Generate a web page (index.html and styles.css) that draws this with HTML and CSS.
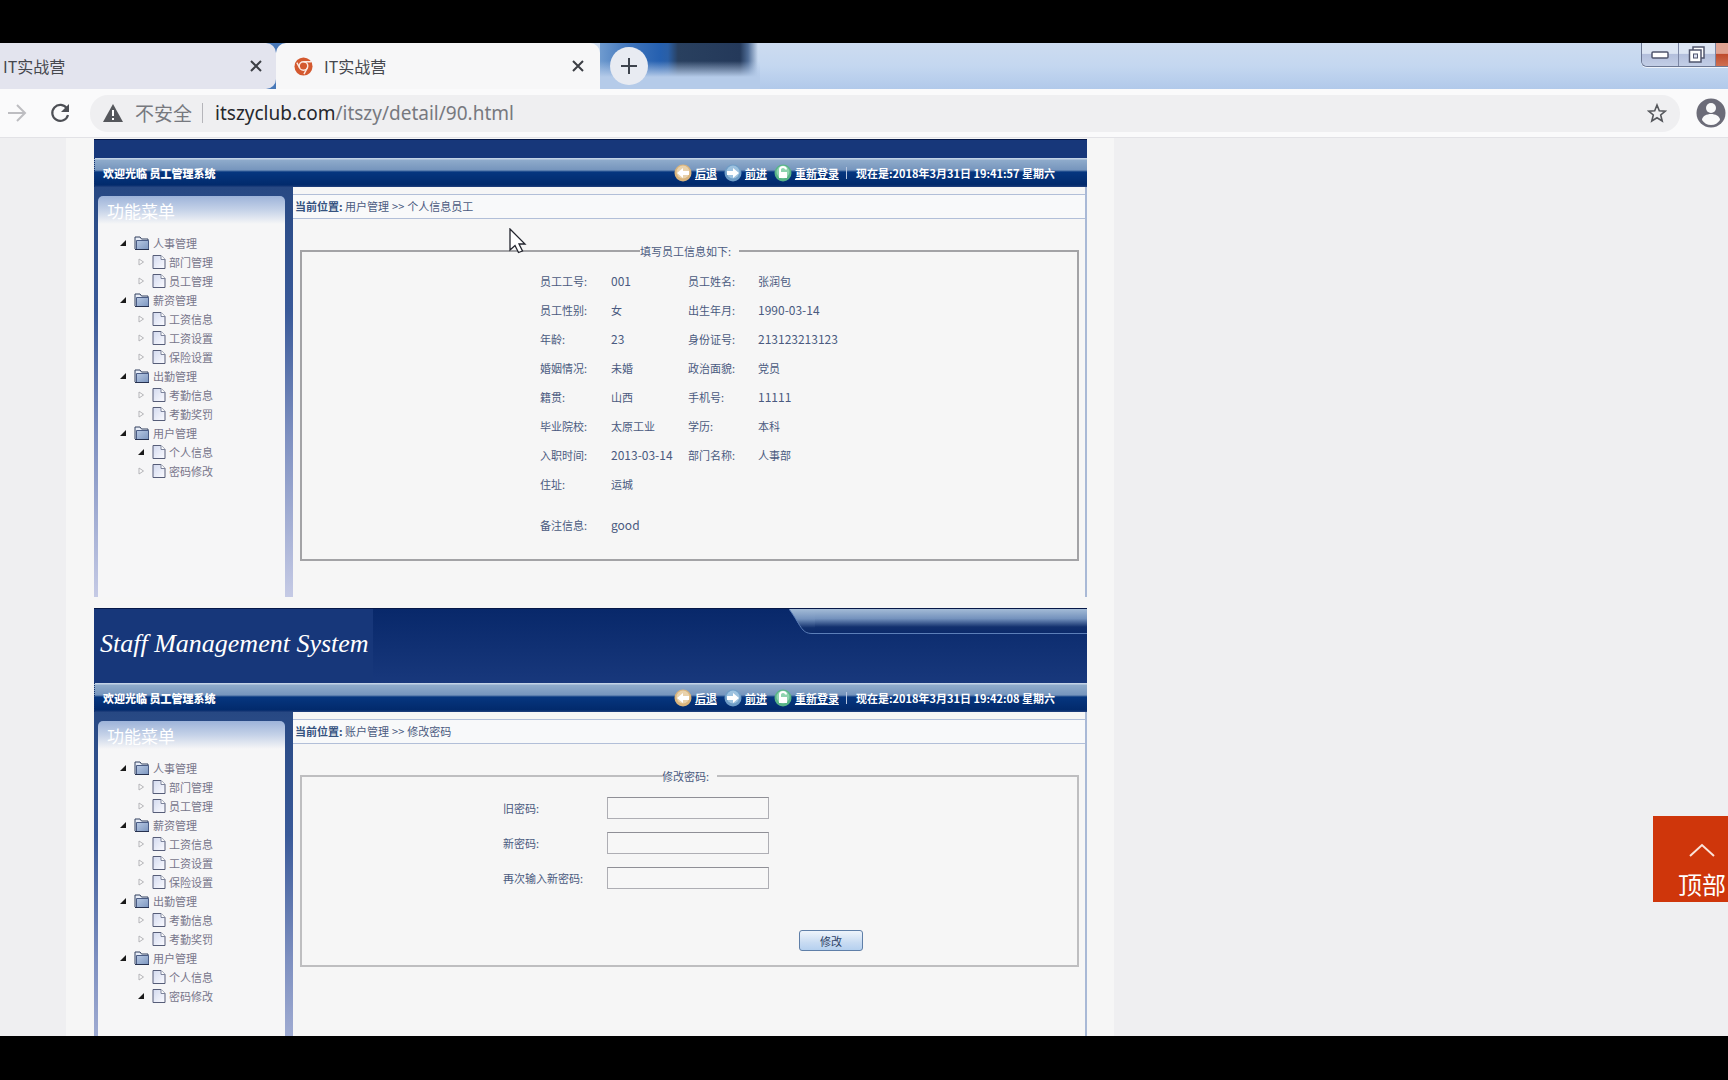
FILE: index.html
```html
<!DOCTYPE html>
<html lang="zh-CN">
<head>
<meta charset="utf-8">
<title>IT实战营</title>
<link rel="stylesheet" href="styles.css">
</head>
<body>
<svg class="defs" aria-hidden="true">
  <defs>
    <linearGradient id="folderFill" x1="0" y1="0" x2="1" y2="1"><stop offset="0" stop-color="#b8c9e4"/><stop offset="1" stop-color="#7c96bf"/></linearGradient>
    <linearGradient id="docFill" x1="0" y1="0" x2="1" y2="1"><stop offset="0" stop-color="#d3daef"/><stop offset="1" stop-color="#fbfbff"/></linearGradient>
    <linearGradient id="tabFill" x1="0" y1="0" x2="0" y2="1"><stop offset="0" stop-color="#a3bbd6"/><stop offset=".4" stop-color="#7492bd"/><stop offset=".75" stop-color="#12306d"/><stop offset="1" stop-color="#0b2a6a"/></linearGradient>
    <symbol id="folder" viewBox="0 0 16 16"><path d="M1 14V2h5l1.500 2H14v2" fill="#e9eef8" stroke="#33405e"/><path d="M2.500 5.500h12v9h-12z" fill="url(#folderFill)" stroke="#4a5c85"/><path d="M1 14.500h14" stroke="#26314f"/></symbol>
    <symbol id="doc" viewBox="0 0 14 16"><path d="M1 1.500h8l4 4v9H1z" fill="url(#docFill)" stroke="#565d78"/><path d="M9 1.500v4h4" fill="#fff" stroke="#7d849c"/></symbol>
    <symbol id="open" viewBox="0 0 8 8"><path d="M7 1v6H1z" fill="#1a1a1a"/></symbol>
    <symbol id="shut" viewBox="0 0 8 8"><path d="M2 1l4.500 3L2 7z" fill="#fafafa" stroke="#b4b4b8"/></symbol>
    <symbol id="back" viewBox="0 0 18 18"><circle cx="9" cy="9" r="8.500" fill="#d9b47c"/><circle cx="9" cy="8" r="6.500" fill="#e9d2ac"/><path d="M3 9l6-5v3h6v4H9v3z" fill="#fff"/></symbol>
    <symbol id="forward" viewBox="0 0 18 18"><circle cx="9" cy="9" r="8.500" fill="#6f9dc6"/><circle cx="9" cy="8" r="6.500" fill="#9dc2df"/><path d="M15 9L9 4v3H3v4h6v3z" fill="#fff"/></symbol>
    <symbol id="relogin" viewBox="0 0 18 18"><circle cx="9" cy="9" r="8.500" fill="#58b487"/><circle cx="9" cy="8" r="6.500" fill="#8ed3ae"/><path d="M5 8h8v6H5z" fill="#fff"/><path d="M6 8V5.500a3 2.500 0 0 1 6 0" fill="none" stroke="#fff" stroke-width="2"/></symbol>
  </defs>
</svg>

<header class="chrome">
  <div class="tabs">
    <div class="tab tab-first"><span>IT实战营</span><button class="icon-btn" aria-label="关闭"><svg width="12" height="12" viewBox="0 0 12 12"><path d="M1 1l10 10M11 1L1 11" stroke="#3c3f45" stroke-width="2"/></svg></button></div>
    <div class="tab tab-active">
      <svg width="19" height="19" viewBox="0 0 20 20"><circle cx="10" cy="10" r="9.500" fill="#d4592f"/><circle cx="10" cy="9.500" r="4.500" fill="none" stroke="#fbe9e2" stroke-width="1.500"/><path d="M10 5h8M6 11.500L3 6M14 11.500L10.500 18" stroke="#fbe9e2" stroke-width="1.500"/></svg>
      <span>IT实战营</span>
      <button class="icon-btn" aria-label="关闭"><svg width="12" height="12" viewBox="0 0 12 12"><path d="M1 1l10 10M11 1L1 11" stroke="#3c3f45" stroke-width="2"/></svg></button>
    </div>
    <div class="glass">
      <button class="new-tab" aria-label="新标签页"><svg width="16" height="16" viewBox="0 0 16 16"><path d="M8 0v16M0 8h16" stroke="#3d434d" stroke-width="2"/></svg></button>
    </div>
    <div class="window-buttons">
      <button aria-label="最小化"><svg width="18" height="8" viewBox="0 0 18 8"><rect x="1" y="1" width="16" height="6" rx="1" fill="#fff" stroke="#50566e" stroke-width="1.500"/></svg></button>
      <button aria-label="还原"><svg width="18" height="18" viewBox="0 0 18 18"><rect x="5" y="1" width="11" height="11" fill="#fff" stroke="#50566e" stroke-width="1.500"/><rect x="1.500" y="4" width="11.500" height="12" fill="#fff" stroke="#50566e" stroke-width="1.500"/><rect x="5.500" y="8" width="4" height="4" fill="#dfe3f2" stroke="#50566e"/></svg></button>
      <button class="close" aria-label="关闭窗口"></button>
    </div>
  </div>
  <div class="toolbar">
    <button class="icon-btn" aria-label="前进"><svg width="20" height="20" viewBox="0 0 20 20"><path d="M0 10h17M9 2l8 8-8 8" fill="none" stroke="#bdbdc1" stroke-width="2"/></svg></button>
    <button class="icon-btn reload" aria-label="重新加载"><svg width="20" height="20" viewBox="0 0 20 20"><path d="M17 5.500A8 8 0 1 0 18 12" fill="none" stroke="#4d4f55" stroke-width="2.200"/><path d="M19 1v8h-8z" fill="#4d4f55"/></svg></button>
    <div class="omnibox">
      <svg width="20" height="18" viewBox="0 0 20 18"><path d="M10 0l10 18H0z" fill="#55575c"/><path d="M10 6v6M10 14v2" stroke="#fff" stroke-width="2"/></svg>
      <span class="insecure">不安全</span>
      <span class="url"><b>itszyclub.com</b>/itszy/detail/90.html</span>
      <button class="icon-btn star" aria-label="收藏"><svg width="20" height="20" viewBox="0 0 20 20"><path d="M10 2l2.300 5.700 6 .4-4.600 3.900 1.500 6L10 14.700 4.800 18l1.500-6L1.700 8.100l6-.4z" fill="none" stroke="#55575c" stroke-width="1.600"/></svg></button>
    </div>
    <button class="icon-btn" aria-label="用户"><svg width="30" height="30" viewBox="0 0 30 30"><circle cx="15" cy="15" r="14.500" fill="#6c6c78"/><circle cx="15" cy="10" r="5" fill="#fafafa"/><path d="M6 22c0-4 5-6 9-6s9 2 9 6c-2 3-5 5-9 5s-7-2-9-5z" fill="#fafafa"/></svg></button>
  </div>
</header>

<main class="viewport">
  <article class="article">

    <section class="shot">
      <div class="banner banner-cut"></div>
      <div class="bar">
        <strong class="welcome">欢迎光临 员工管理系统</strong>
        <nav class="quick">
          <a href="#"><svg width="18" height="18"><use href="#back"/></svg><span>后退</span></a>
          <a href="#"><svg width="18" height="18"><use href="#forward"/></svg><span>前进</span></a>
          <a href="#"><svg width="18" height="18"><use href="#relogin"/></svg><span>重新登录</span></a>
          <i></i>
          <time>现在是:2018年3月31日 19:41:57 星期六</time>
        </nav>
      </div>
      <div class="body">
        <aside class="side">
          <div class="panel">
            <h2>功能菜单</h2>
            <ul class="tree">
              <li><a href="#"><svg width="8" height="8"><use href="#open"/></svg><svg width="16" height="16"><use href="#folder"/></svg>人事管理</a>
                <ul><li><a href="#"><svg width="8" height="8"><use href="#shut"/></svg><svg width="14" height="16"><use href="#doc"/></svg>部门管理</a></li>
                <li><a href="#"><svg width="8" height="8"><use href="#shut"/></svg><svg width="14" height="16"><use href="#doc"/></svg>员工管理</a></li></ul></li>
              <li><a href="#"><svg width="8" height="8"><use href="#open"/></svg><svg width="16" height="16"><use href="#folder"/></svg>薪资管理</a>
                <ul><li><a href="#"><svg width="8" height="8"><use href="#shut"/></svg><svg width="14" height="16"><use href="#doc"/></svg>工资信息</a></li>
                <li><a href="#"><svg width="8" height="8"><use href="#shut"/></svg><svg width="14" height="16"><use href="#doc"/></svg>工资设置</a></li>
                <li><a href="#"><svg width="8" height="8"><use href="#shut"/></svg><svg width="14" height="16"><use href="#doc"/></svg>保险设置</a></li></ul></li>
              <li><a href="#"><svg width="8" height="8"><use href="#open"/></svg><svg width="16" height="16"><use href="#folder"/></svg>出勤管理</a>
                <ul><li><a href="#"><svg width="8" height="8"><use href="#shut"/></svg><svg width="14" height="16"><use href="#doc"/></svg>考勤信息</a></li>
                <li><a href="#"><svg width="8" height="8"><use href="#shut"/></svg><svg width="14" height="16"><use href="#doc"/></svg>考勤奖罚</a></li></ul></li>
              <li><a href="#"><svg width="8" height="8"><use href="#open"/></svg><svg width="16" height="16"><use href="#folder"/></svg>用户管理</a>
                <ul><li><a href="#"><svg width="8" height="8"><use href="#open"/></svg><svg width="14" height="16"><use href="#doc"/></svg>个人信息</a></li>
                <li><a href="#"><svg width="8" height="8"><use href="#shut"/></svg><svg width="14" height="16"><use href="#doc"/></svg>密码修改</a></li></ul></li>
            </ul>
          </div>
        </aside>
        <div class="content">
          <p class="crumb"><strong>当前位置:</strong> 用户管理<span>&gt;&gt;</span>个人信息员工</p>
          <fieldset class="box box-info">
            <legend>填写员工信息如下:</legend>
            <table class="info">
              <tr><th>员工工号:</th><td class="num">001</td><th>员工姓名:</th><td>张润包</td></tr>
              <tr><th>员工性别:</th><td>女</td><th>出生年月:</th><td class="num">1990-03-14</td></tr>
              <tr><th>年龄:</th><td class="num">23</td><th>身份证号:</th><td class="num">213123213123</td></tr>
              <tr><th>婚姻情况:</th><td>未婚</td><th>政治面貌:</th><td>党员</td></tr>
              <tr><th>籍贯:</th><td>山西</td><th>手机号:</th><td class="num">11111</td></tr>
              <tr><th>毕业院校:</th><td>太原工业</td><th>学历:</th><td>本科</td></tr>
              <tr><th>入职时间:</th><td class="num">2013-03-14</td><th>部门名称:</th><td>人事部</td></tr>
              <tr><th>住址:</th><td>运城</td><th></th><td></td></tr>
              <tr class="note"><th>备注信息:</th><td class="num">good</td><th></th><td></td></tr>
            </table>
          </fieldset>
        </div>
      </div>
    </section>

    <section class="shot">
      <div class="banner">
        <div class="logo">Staff Management System</div>
        <svg class="notch" viewBox="0 0 26 26" width="26" height="26"><path d="M0 0h26v25h-3C12 25 12 16 0 0z" fill="url(#tabFill)"/><path d="M0 0c12 16 12 24.500 23 24.500h3" fill="none" stroke="#5c7fb8"/></svg>
        <div class="ribbon"></div>
      </div>
      <div class="bar">
        <strong class="welcome">欢迎光临 员工管理系统</strong>
        <nav class="quick">
          <a href="#"><svg width="18" height="18"><use href="#back"/></svg><span>后退</span></a>
          <a href="#"><svg width="18" height="18"><use href="#forward"/></svg><span>前进</span></a>
          <a href="#"><svg width="18" height="18"><use href="#relogin"/></svg><span>重新登录</span></a>
          <i></i>
          <time>现在是:2018年3月31日 19:42:08 星期六</time>
        </nav>
      </div>
      <div class="body">
        <aside class="side">
          <div class="panel">
            <h2>功能菜单</h2>
            <ul class="tree">
              <li><a href="#"><svg width="8" height="8"><use href="#open"/></svg><svg width="16" height="16"><use href="#folder"/></svg>人事管理</a>
                <ul><li><a href="#"><svg width="8" height="8"><use href="#shut"/></svg><svg width="14" height="16"><use href="#doc"/></svg>部门管理</a></li>
                <li><a href="#"><svg width="8" height="8"><use href="#shut"/></svg><svg width="14" height="16"><use href="#doc"/></svg>员工管理</a></li></ul></li>
              <li><a href="#"><svg width="8" height="8"><use href="#open"/></svg><svg width="16" height="16"><use href="#folder"/></svg>薪资管理</a>
                <ul><li><a href="#"><svg width="8" height="8"><use href="#shut"/></svg><svg width="14" height="16"><use href="#doc"/></svg>工资信息</a></li>
                <li><a href="#"><svg width="8" height="8"><use href="#shut"/></svg><svg width="14" height="16"><use href="#doc"/></svg>工资设置</a></li>
                <li><a href="#"><svg width="8" height="8"><use href="#shut"/></svg><svg width="14" height="16"><use href="#doc"/></svg>保险设置</a></li></ul></li>
              <li><a href="#"><svg width="8" height="8"><use href="#open"/></svg><svg width="16" height="16"><use href="#folder"/></svg>出勤管理</a>
                <ul><li><a href="#"><svg width="8" height="8"><use href="#shut"/></svg><svg width="14" height="16"><use href="#doc"/></svg>考勤信息</a></li>
                <li><a href="#"><svg width="8" height="8"><use href="#shut"/></svg><svg width="14" height="16"><use href="#doc"/></svg>考勤奖罚</a></li></ul></li>
              <li><a href="#"><svg width="8" height="8"><use href="#open"/></svg><svg width="16" height="16"><use href="#folder"/></svg>用户管理</a>
                <ul><li><a href="#"><svg width="8" height="8"><use href="#shut"/></svg><svg width="14" height="16"><use href="#doc"/></svg>个人信息</a></li>
                <li><a href="#"><svg width="8" height="8"><use href="#open"/></svg><svg width="14" height="16"><use href="#doc"/></svg>密码修改</a></li></ul></li>
            </ul>
          </div>
        </aside>
        <div class="content">
          <p class="crumb"><strong>当前位置:</strong> 账户管理<span>&gt;&gt;</span>修改密码</p>
          <fieldset class="box box-password">
            <legend>修改密码:</legend>
            <form class="password">
              <label for="old">旧密码:</label><input id="old" type="password">
              <label for="new">新密码:</label><input id="new" type="password">
              <label for="again">再次输入新密码:</label><input id="again" type="password">
              <button type="button">修改</button>
            </form>
          </fieldset>
        </div>
      </div>
    </section>
  </article>

  <a class="to-top" href="#"><svg width="28" height="16" viewBox="0 0 28 16"><path d="M2 14L14 3l12 11" fill="none" stroke="#fbe3da" stroke-width="2"/></svg><span>顶部</span></a>
</main>

<svg class="pointer" width="18" height="26" viewBox="0 0 18 26" aria-hidden="true"><path d="M1 1v21l5-4.500 3.500 7 4-1.500-3.500-7h6z" fill="#fff" stroke="#23252e" stroke-width="1.300"/></svg>
</body>
</html>
```
FILE: styles.css
```css
* { box-sizing: border-box; }

body {
  margin: 0;
  height: 100vh;
  display: flex;
  flex-direction: column;
  overflow: hidden;
  border-top: 43px solid #000;
  border-bottom: 44px solid #000;
  background: #efeff1;
  font-family: "Noto Sans CJK SC", sans-serif;
  font-size: 11px;
  color: #4a5a80;
}

.defs { position: absolute; width: 0; height: 0; }
svg { flex: none; display: block; }
button { padding: 0; border: 0; background: none; font: inherit; }
.icon-btn { display: grid; place-items: center; }

/* browser frame */
.chrome { flex: none; }

.tabs {
  display: flex;
  height: 46px;
  background:
    linear-gradient(90deg, #4878b8 560px, transparent 560px),
    linear-gradient(180deg, #cddcf0, #c4d7f0 50%, #b1c9ea);
}

.tab {
  display: flex;
  align-items: center;
  font-size: 16px;
  color: #45474d;
  background: #e3e4ee;
}
.tab .icon-btn { margin-left: auto; }
.tab-first { width: 276px; padding: 0 14px 0 3px; border-radius: 0 10px 10px 0; }
.tab-active { width: 324px; padding: 0 16px 0 18px; gap: 11px; border-radius: 10px 10px 0 0; background: #f7f7f8; }

/* desktop seen through the translucent title bar */
.glass {
  display: flex;
  align-items: center;
  width: 160px;
  background:
    linear-gradient(180deg, transparent 18px, #b5cbe9 34px),
    linear-gradient(90deg, #6f9bcf 0, #3f74bb 30px, #2560b0 60px, #2a5fa6 68px, #29405f 78px, #24395a 140px, #4f6c95 148px, transparent 158px);
}

.new-tab {
  display: grid;
  place-items: center;
  width: 38px;
  height: 38px;
  margin-left: 10px;
  border-radius: 50%;
  background: #e8ebf2;
}

.window-buttons {
  display: flex;
  margin-left: auto;
  height: 24px;
  border: 1px solid #6c7793;
  border-width: 0 0 1px 1px;
  border-radius: 0 0 0 6px;
  overflow: hidden;
  box-shadow: 0 1px 0 #eef3fb;
}
.window-buttons button {
  display: grid;
  place-items: center;
  width: 37px;
  border-right: 1px solid #7b86a4;
  background: linear-gradient(#dce5f3 0 45%, #b3bfdc 50%, #c3cee6);
}
.window-buttons .close { width: 12px; border: 0; background: linear-gradient(#e0a392 0 45%, #bf4c2e 50%, #cf7052); }

.toolbar {
  display: flex;
  align-items: center;
  height: 49px;
  padding: 0 2px 0 8px;
  background: #fafafb;
  border-bottom: 1px solid #e2e2e6;
}
.reload { margin: 0 20px 0 22px; }

.omnibox {
  flex: 1;
  display: flex;
  align-items: center;
  height: 37px;
  margin-right: 16px;
  padding: 0 13px;
  border-radius: 18px;
  background: #efeff1;
  font-size: 19px;
  color: #77797f;
}
.insecure { margin-left: 12px; padding-right: 10px; line-height: 20px; border-right: 1px solid #b5b5ba; }
.url { margin-left: 12px; font-family: "Noto Sans", "Open Sans", sans-serif; }
.url b { font-weight: 400; color: #26282d; }
.star { margin-left: auto; }

/* page */
.viewport {
  position: relative;
  flex: 1;
  min-height: 0;
  overflow: hidden;
  display: grid;
  grid-template-columns: 66px minmax(0, 1048fr) minmax(0, 614fr);
}

.article {
  grid-column: 2;
  display: flex;
  flex-direction: column;
  gap: 11px;
  padding: 1px 27px 0 28px;
  background: #f6f6f6;
}

.banner {
  display: flex;
  height: 75px;
  background: linear-gradient(#08286a, #18387c);
  border-top: 1px solid #061848;
}
.banner-cut { height: 19px; background: #17377a; }
.logo {
  flex: none;
  width: 279px;
  padding: 18px 0 0 6px;
  background: #17377a;
  color: #fff;
  font: italic 26px/34px "Monotype Corsiva", "Liberation Serif", serif;
  white-space: nowrap;
}
.notch { margin-left: auto; }
.ribbon {
  width: 272px;
  height: 25px;
  background: linear-gradient(#a3bbd6, #7492bd 40%, #12306d 75%, #0b2a6a);
  border-bottom: 1px solid #5c7fb8;
}

.bar {
  display: flex;
  align-items: center;
  justify-content: space-between;
  height: 29px;
  padding: 0 32px 0 8px;
  border-left: 1px dotted #12306d;
  background: linear-gradient(#c3d3e6 0 1px, #8fabcb 2px, #7695bd 12px, #06367f 14px, #022a6c 27px, #24427e);
  color: #fff;
  font-weight: 700;
}
.quick { display: flex; align-items: center; }
.quick a { display: flex; align-items: center; gap: 3px; margin-right: 7px; color: #fff; }
.quick i { width: 1px; height: 12px; background: #b9c7e0; margin-right: 9px; }

.body { display: grid; grid-template-columns: 199px minmax(0, 1fr); min-height: 410px; }
.side { padding: 9px 8px 0 4px; background: linear-gradient(#274883, #3a5a99 30%, #7d8fc0 60%, #c5cae5); }
.panel {
  height: 100%;
  border-radius: 5px 5px 0 0;
  background: linear-gradient(#9db3d9, #c5d2e8 14px, #f6f6f7 28px);
}
.panel h2 { margin: 0; padding: 0 9px; font-size: 17px; line-height: 30px; font-weight: 400; color: #fff; }

.tree, .tree ul { margin: 0; padding: 0; list-style: none; }
.tree { padding: 7px 0 0 21px; }
.tree ul { padding-left: 18px; }
.tree a { display: flex; align-items: center; height: 19px; gap: 3px; color: #77758a; text-decoration: none; }
.tree a svg:first-child { margin-right: 4px; }

.content { padding-top: 7px; border-right: 2px solid #a9b9d6; background: #f6f6f6; }
.crumb {
  margin: 0;
  height: 25px;
  padding-left: 2px;
  line-height: 23px;
  border: 1px solid #b2bfd8;
  border-width: 1px 0;
  background: #f8f9fa;
}
.crumb strong { color: #35527f; }
.crumb span { padding: 0 3px; }

.box { margin: 24px 6px 0 7px; border: 2px solid #a3a3a6; }
.box legend { margin: 0 auto; padding: 0 8px 0 0; line-height: 16px; }
.box-info { padding: 7px 0; }
.box-password { padding: 6px 0 14px; border-color: #bebec0; }

.info { width: 299px; margin: 0 auto; border-collapse: collapse; table-layout: fixed; }
.info th, .info td { width: 77px; height: 29px; padding: 0; line-height: 16px; text-align: left; font-weight: 400; white-space: nowrap; }
.info th { width: 71px; }
.info td:last-child { width: 81px; }
.info th:nth-child(3) { width: 70px; }
.info .note th, .info .note td { height: 54px; }
.info .num { font-size: 12px; }

.password {
  width: 373px;
  margin: 0 auto;
  display: grid;
  grid-template-columns: 104px 162px 94px;
  grid-template-rows: 35px 35px 35px 56px;
  align-items: center;
}
.password label { grid-column: 1; }
.password input { height: 22px; margin: 0; border: 1px solid #aeaeb4; border-top-color: #8f8f96; background: #f7f7f7; }
.password button {
  grid-area: 4 / 3;
  justify-self: end;
  align-self: end;
  width: 64px;
  height: 21px;
  border: 1px solid #5f7fa8;
  border-radius: 3px;
  background: linear-gradient(#eef4fb, #c9dcf2 60%, #b5d0ef);
  color: #2c4266;
}

.to-top {
  position: absolute;
  right: 0;
  bottom: 134px;
  width: 75px;
  height: 86px;
  padding: 26px 1px 0 24px;
  display: flex;
  flex-direction: column;
  align-items: center;
  gap: 9px;
  background: #cf360b;
  color: #fff;
  font-size: 24px;
  line-height: 34px;
  text-decoration: none;
}

.pointer { position: absolute; left: 509px; top: 228px; }
```
